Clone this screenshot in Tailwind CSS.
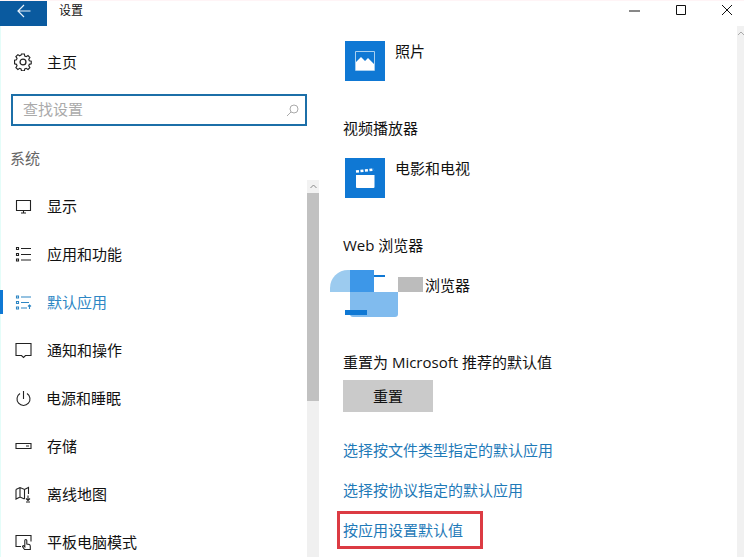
<!DOCTYPE html>
<html lang="zh-CN">
<head>
    <meta charset="UTF-8">
    <meta name="viewport" content="width=device-width, initial-scale=1.0">
    <title>设置</title>
    <script src="https://cdn.jsdelivr.net/npm/@tailwindcss/browser@4"></script>
</head>
<body class="bg-white overflow-hidden font-['Open_Sans','Noto_Sans_CJK_SC',sans-serif] text-[15px] text-[#111]">

    <div class="w-[744px] h-[557px] flex overflow-hidden border-t border-[#fff4f6]">

        <!-- Sidebar -->
        <div class="w-[320px] h-full flex flex-col shrink-0 border-l border-[#e4fdf9]">
            <!-- Title bar -->
            <div class="h-[25px] flex items-start shrink-0 -ml-px">
                <div class="w-[47px] h-[25px] bg-[#0a5a9f] flex items-center justify-center">
                    <svg class="w-[14px] h-[14px] mb-[6px]" viewBox="0 0 14 14" fill="none" stroke="#e8f2fb" stroke-width="1.2"><path d="M1 7h12.5M7 1 1 7l6 6"/></svg>
                </div>
                <span class="ml-3 mt-[2px] text-[12px] leading-[12px] translate-y-[2px]">设置</span>
            </div>

            <!-- Home -->
            <div class="h-[48px] mt-3 flex items-center pl-[13px] shrink-0">
                <svg class="w-[18px] h-[18px] mr-[15px]" viewBox="0 0 17 17" fill="none" stroke="#222" stroke-width="1.2"><path d="M7 1h3l.4 2.2 1.5.7 1.9-1.2 2 2.1-1.2 1.800.6 1.600 2 .4v2.800l-2 .5-.6 1.500 1.200 1.900-2 2-1.900-1.200-1.500.6-.4 2.100H7l-.5-2.100-1.500-.6-1.800 1.200-2.100-2 1.200-1.900-.6-1.500-2-.5V7.600l2-.4.6-1.600-1.200-1.800 2.100-2.100 1.800 1.200 1.500-.7z" transform="translate(.8 0) scale(.9)"/><circle cx="8.500" cy="8.500" r="2.800"/></svg>
                <span>主页</span>
            </div>

            <!-- Search -->
            <div class="h-[32px] mt-2 ml-[10px] w-[296px] border-2 border-[#1c6fa8] flex items-center justify-between pl-[10px] pr-[6px] shrink-0">
                <span class="text-[#aaa] -mt-[2px]">查找设置</span>
                <svg class="w-[13px] h-[13px]" viewBox="0 0 13 13" fill="none" stroke="#aaa" stroke-width="1"><circle cx="8" cy="5" r="4"/><path d="M5 8 1 12"/></svg>
            </div>

            <div class="h-[26px] mt-[19px] ml-[9px] flex items-center text-[#666] shrink-0">系统</div>

            <!-- Menu and scrollbar -->
            <div class="flex-1 min-h-0 mt-[10px] flex">
                <div class="flex-1 pt-px">
                    <div class="h-[48px] flex items-center pl-[14px]">
                        <svg class="w-[17px] h-[17px] mr-[15px]" viewBox="0 0 17 17" fill="none" stroke="#222" stroke-width="1.100"><path d="M1.500 2.500h14v10h-14zM8.500 12.500v2.500M6 15h5"/></svg>
                        <span>显示</span>
                    </div>
                    <div class="h-[48px] flex items-center pl-[14px]">
                        <svg class="w-[17px] h-[17px] mr-[15px]" viewBox="0 0 17 17" fill="none" stroke="#222" stroke-width="1.100"><path d="M1.500 1.500h2v2h-2zM1.500 7.500h2v2h-2zM1.500 13h2v2h-2zM6 2.500h10M6 8.500h10M6 14h10"/></svg>
                        <span>应用和功能</span>
                    </div>
                    <div class="relative h-[48px] flex items-center pl-[14px] text-[#2d86c4]">
                        <div class="absolute -left-px top-[12px] w-[3px] h-[24px] bg-[#0f78d4]"></div>
                        <svg class="w-[17px] h-[17px] mr-[15px]" viewBox="0 0 17 17" fill="none" stroke="#2d86c4" stroke-width="1.100"><path d="M1.500 2h2v2h-2zM1.500 7.500h2v2h-2zM1.500 13h2v2h-2zM6 3h10M6 8.500h8M6 14h6M14.500 15V11M13 12.500l1.500-1.500 1.500 1.500"/></svg>
                        <span>默认应用</span>
                    </div>
                    <div class="h-[48px] flex items-center pl-[14px]">
                        <svg class="w-[17px] h-[17px] mr-[15px]" viewBox="0 0 17 17" fill="none" stroke="#222" stroke-width="1.100"><path d="M1 1.500h15v12h-5.500l-2 2-2-2H1z"/></svg>
                        <span>通知和操作</span>
                    </div>
                    <div class="h-[48px] flex items-center pl-[14px]">
                        <svg class="w-[17px] h-[17px] mr-[14px]" viewBox="0 0 17 17" fill="none" stroke="#222" stroke-width="1.100"><path d="M8.500 1v8M5 3.500a6.500 6.500 0 1 0 7 0"/></svg>
                        <span>电源和睡眠</span>
                    </div>
                    <div class="h-[48px] flex items-center pl-[14px]">
                        <svg class="w-[17px] h-[17px] mr-[15px]" viewBox="0 0 17 17" fill="none" stroke="#222" stroke-width="1.100"><path d="M1 5.500h15v5H1zM11 8h3"/></svg>
                        <span>存储</span>
                    </div>
                    <div class="h-[48px] flex items-center pl-[14px]">
                        <svg class="w-[17px] h-[17px] mr-[15px]" viewBox="0 0 17 17" fill="none" stroke="#222" stroke-width="1.100"><path d="M1 3.500 5 1.500l4.500 2 4-2V8M1 3.500V13l4-2 4.500 2M5 1.500V11M9.500 3.500V13M13 9.500v4.500M11 12.500l2 2 2-2M11 16h4"/></svg>
                        <span>离线地图</span>
                    </div>
                    <div class="h-[48px] flex items-center pl-[14px]">
                        <svg class="w-[17px] h-[17px] mr-[15px]" viewBox="0 0 17 17" fill="none" stroke="#222" stroke-width="1.100"><path d="M6 12.500H1v-11h15v6M9.500 15.500 7.500 12.500c0-1 1-1 1.500-.5l.8.8V6.500a1 1 0 0 1 2 0V10l2.500.5c1 .3 1 1 1 2v3z"/></svg>
                        <span>平板电脑模式</span>
                    </div>
                </div>
                <div class="w-[12px] mr-px flex flex-col shrink-0 -mt-px">
                    <div class="h-[13px] bg-[#f2f2f2] flex items-center justify-center">
                        <svg class="w-[7px] h-[5px]" viewBox="0 0 7 5" fill="none" stroke="#888" stroke-width="1"><path d="m.5 4 3-3 3 3"/></svg>
                    </div>
                    <div class="h-[208px] bg-[#c1c1c1]"></div>
                    <div class="flex-1 bg-[#f0f0f0]"></div>
                </div>
            </div>
        </div>

        <!-- Main -->
        <div class="flex-1 min-w-0 flex flex-col">
            <!-- Window controls -->
            <div class="h-[25px] flex items-start shrink-0 pt-[4px] pl-[309px] gap-[36px]">
                <svg class="w-[11px] h-[11px]" viewBox="0 0 11 11" fill="none" stroke="#111" stroke-width="1"><path d="M0 6h11"/></svg>
                <svg class="w-[10px] h-[10px]" viewBox="0 0 10 10" fill="none" stroke="#111" stroke-width="1"><path d="M.5.5h9v9h-9z"/></svg>
                <svg class="w-[10px] h-[10px]" viewBox="0 0 10 10" fill="none" stroke="#111" stroke-width="1"><path d="m0 0 10 10M10 0 0 10"/></svg>
            </div>

            <div class="flex-1 min-h-0 flex">
                <div class="flex-1 pl-[23px]">
                    <!-- Photos -->
                    <div class="mt-[15px] ml-[2px] flex items-start">
                        <div class="w-[40px] h-[40px] bg-[#0f78d4] flex items-center justify-center shrink-0">
                            <svg class="w-[20px] h-[20px]" viewBox="0 0 20 20"><path fill="none" stroke="#a9d0f0" d="M.5.500h19v19H.5z"/><path fill="#fff" d="M1 19V11l5-5 4 4 3-3 6 6v6z"/></svg>
                        </div>
                        <span class="ml-[10px] leading-[20px]">照片</span>
                    </div>

                    <div class="mt-[37px] h-[20px] leading-[20px]">视频播放器</div>

                    <!-- Movies -->
                    <div class="mt-[20px] ml-[2px] flex items-start">
                        <div class="w-[40px] h-[40px] bg-[#0f78d4] flex items-center justify-center shrink-0">
                            <svg class="w-[20px] h-[22px]" viewBox="0 0 20 22"><path fill="#fff" d="M1 8h18.500v12a1 1 0 0 1-1 1H2a1 1 0 0 1-1-1z"/><path fill="none" stroke="#fff" stroke-width="2.500" stroke-dasharray="3 1.500" d="m1 4.500 18-2"/></svg>
                        </div>
                        <span class="ml-[10px] leading-[20px]">电影和电视</span>
                    </div>

                    <div class="mt-[37px] h-[20px] leading-[20px]">Web 浏览器</div>

                    <!-- Browser, covered by a mosaic -->
                    <div class="relative mt-[21px] ml-[2px] h-[40px] flex items-start">
                        <span class="ml-[80px] leading-[20px] mt-[-1px]">浏览器</span>
                        <div class="absolute left-[-15px] top-[-6px] w-[20px] h-[22px] bg-[#9ccbef] rounded-tl-[18px]"></div>
                        <div class="absolute left-[5px] top-[-6px] w-[24px] h-[22px] bg-[#3d97e8]"></div>
                        <div class="absolute left-[29px] top-[-1px] w-[11px] h-[2px] bg-[#0f78d4]"></div>
                        <div class="absolute left-[53px] top-[1px] w-[25px] h-[15px] bg-[#bcbcbc]"></div>
                        <div class="absolute left-[5px] top-[16px] w-[48px] h-[25px] bg-[#80bbee] rounded-b-[3px]"></div>
                        <div class="absolute left-0 top-[34px] w-[22px] h-[5px] bg-[#0f78d4]"></div>
                    </div>

                    <div class="mt-[36px] h-[20px] leading-[20px]">重置为 Microsoft 推荐的默认值</div>
                    <div class="mt-[8px] w-[90px] h-[32px] bg-[#cacaca] flex items-center justify-center">重置</div>

                    <div class="mt-[28px] h-[20px] leading-[20px] text-[#1f7ab8]">选择按文件类型指定的默认应用</div>
                    <div class="mt-[20px] h-[20px] leading-[20px] text-[#1f7ab8]">选择按协议指定的默认应用</div>
                    <div class="mt-[11px] -ml-[6px] w-[146px] h-[38px] border-[3px] border-[#dc3b43] flex items-center pl-[3px] text-[#1f7ab8]">按应用设置默认值</div>
                </div>

                <!-- Right scrollbar -->
                <div class="w-[7px] bg-[#f1f1f1] shrink-0">
                    <svg class="w-[7px] h-[6px] mt-[4px]" viewBox="0 0 7 6" fill="none" stroke="#aaa" stroke-width="1"><path d="m1 5 3-3 3 3"/></svg>
                </div>
            </div>
        </div>
    </div>

</body>
</html>
